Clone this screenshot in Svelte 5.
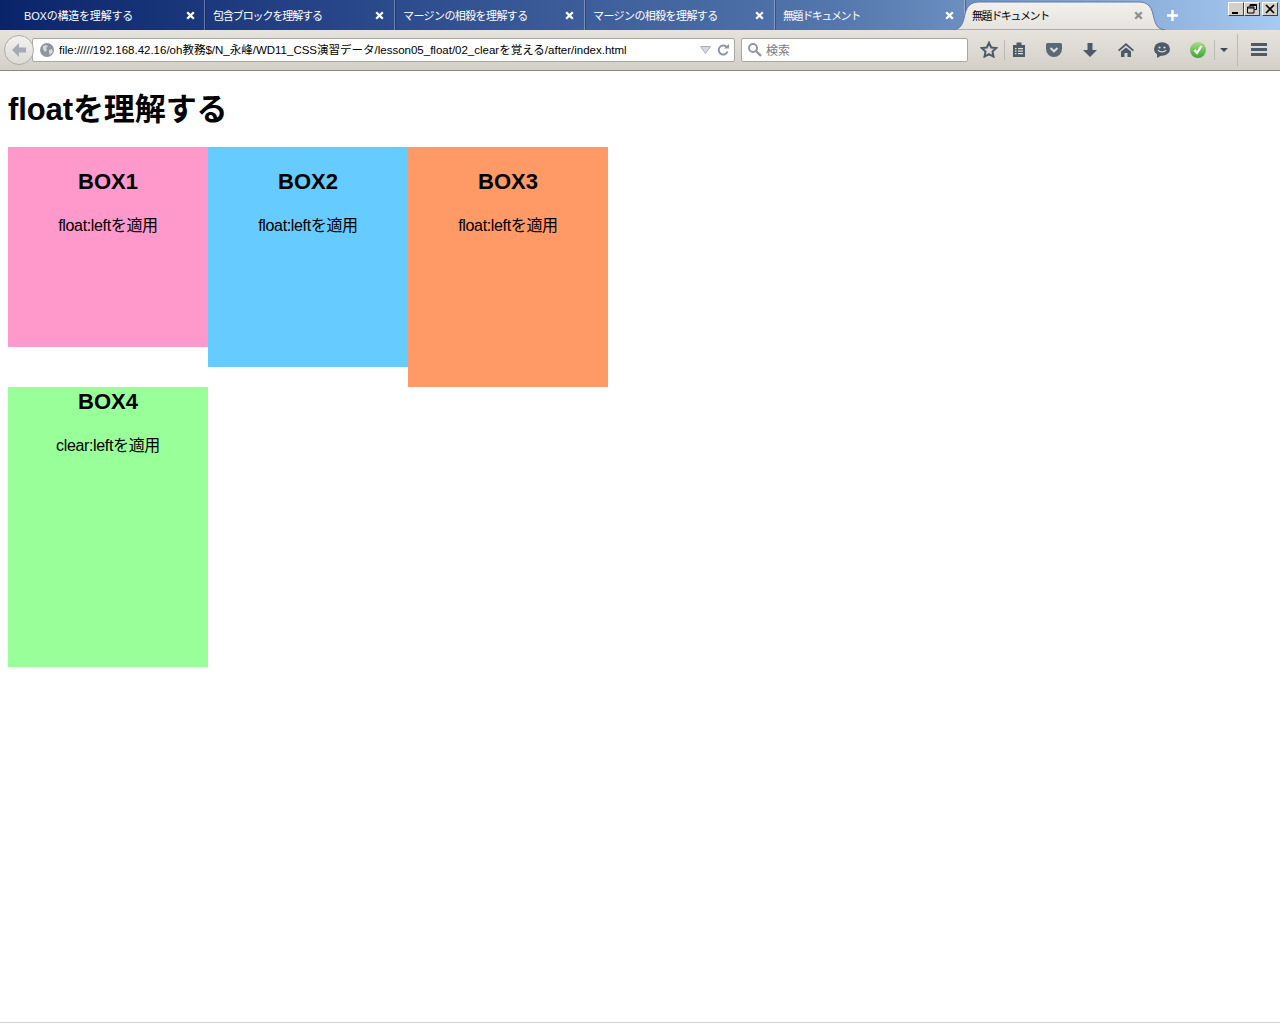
<script lang="ts">
  // spacing per tab: the reference's katakana run narrower than the fallback font
  const tabs = [
    { title: 'BOXの構造を理解する', ls: -0.2 },
    { title: '包含ブロックを理解する', ls: -1.1 },
    { title: 'マージンの相殺を理解する', ls: -0.6 },
    { title: 'マージンの相殺を理解する', ls: -0.6 },
    { title: '無題ドキュメント', ls: -1.4 }
  ];
  const boxes = [
    { name: 'BOX1', note: 'float:leftを適用', cls: 'b1' },
    { name: 'BOX2', note: 'float:leftを適用', cls: 'b2' },
    { name: 'BOX3', note: 'float:leftを適用', cls: 'b3' },
    { name: 'BOX4', note: 'clear:leftを適用', cls: 'b4' }
  ];
</script>

{#snippet closeIcon(color: string)}
  <svg class="close" width="9" height="9" viewBox="0 0 9 9">
    <path d="M1.2 1.2 7.8 7.8M7.8 1.2 1.2 7.8" stroke={color} stroke-width="2.3" />
  </svg>
{/snippet}

<div class="window">
  <header class="tabstrip">
    {#each tabs as t}
      <div class="tab">
        <span class="title" style={`letter-spacing:${t.ls}px`}>{t.title}</span>
        {@render closeIcon('#fff')}
      </div>
    {/each}
    <div class="tab active">
      <svg class="tabshape" width="212" height="30" viewBox="0 0 212 30">
        <defs>
          <linearGradient id="act" x1="0" y1="0" x2="0" y2="1">
            <stop offset="0" stop-color="#f2f1ee" />
            <stop offset="1" stop-color="#e5e3de" />
          </linearGradient>
        </defs>
        <path d="M0 30C8 29 10 24 12 14 14 6 18 2 26 2H186C194 2 198 6 200 14 202 24 204 29 212 30Z" fill="url(#act)" stroke="#5f7ba6" stroke-width="1" />
      </svg>
      <span class="title" style="letter-spacing:-1.4px">無題ドキュメント</span>
      {@render closeIcon('#8f8f8f')}
    </div>
    <svg class="newtab" width="13" height="13" viewBox="0 0 13 13">
      <path d="M6.500 1v11M1 6.500h11" stroke="#fff" stroke-width="2.4" />
    </svg>
    <div class="winbtns">
      <button aria-label="minimize"><svg width="10" height="10" viewBox="0 0 10 10"><path d="M1 8h6v2H1z" fill="#000" /></svg></button>
      <button aria-label="restore"><svg width="10" height="10" viewBox="0 0 10 10"><path d="M3 .5h6.500v5H7.500M3 .5v2M3 1.500h6.500M.5 3h6.500v6H.5zM.5 4h6.500" fill="none" stroke="#000" /></svg></button>
      <button class="x" aria-label="close"><svg width="10" height="10" viewBox="0 0 10 10"><path d="M1 1 9 9M9 1 1 9" stroke="#000" stroke-width="1.700" /></svg></button>
    </div>
  </header>

  <nav class="toolbar">
    <div class="back">
      <svg width="18" height="16" viewBox="0 0 18 16"><path d="M9 1 2 8l7 7V10.500h7v-5H9z" fill="#a3acb6" /></svg>
    </div>
    <div class="urlbar">
      <svg class="globe" width="14" height="14" viewBox="0 0 14 14">
        <circle cx="7" cy="7" r="7" fill="#8f969c" />
        <path d="M3 3c2-1 4-1 5 0L6 5 7 7 5 9 3 6zM9 7l3-1 1 3-3 3-1-2z" fill="#d5d8da" />
      </svg>
      <span class="url">file://///192.168.42.16/oh教務$/N_永峰/WD11_CSS演習データ/lesson05_float/02_clearを覚える/after/index.html</span>
      <svg class="drop" width="11" height="8" viewBox="0 0 11 8"><path d="M.5.500h10L5.500 7.500z" fill="#d5dae2" stroke="#aab2bf" /></svg>
      <svg class="reload" width="12" height="12" viewBox="0 0 12 12">
        <path d="M10 3.500A4.500 4.500 0 1 0 10.500 7.500" fill="none" stroke="#8d97a3" stroke-width="2" />
        <path d="M7 4.500h5V0z" fill="#8d97a3" />
      </svg>
    </div>
    <div class="search">
      <svg width="15" height="15" viewBox="0 0 15 15">
        <circle cx="6" cy="6" r="4" fill="none" stroke="#8f979f" stroke-width="2" />
        <path d="m9 9 5 5" stroke="#8f979f" stroke-width="2.400" />
      </svg>
      <span>検索</span>
    </div>
    <div class="icons">
      <svg class="star" width="18" height="17" viewBox="0 0 18 17">
        <path d="m9 1.800 2.200 4.700 5 .6-3.700 3.500 1 5L9 13.100l-4.500 2.500 1-5L1.800 7.100l5-.6z" fill="none" stroke="#4c5a69" stroke-width="2" />
      </svg>
      <i class="sep s1"></i>
      <svg class="clip" width="14" height="15" viewBox="0 0 14 15">
        <path d="M1 3h3.500V.500h5V3H13v12H1z" fill="#4c5a69" />
        <path d="M3 6h1.500v1.300H3zM6 6h5v1.300H6zM3 8.500h1.500v1.300H3zM6 8.500h5v1.300H6zM3 11h1.500v1.300H3zM6 11h5v1.300H6z" fill="#dedcd6" />
      </svg>
      <svg class="pocket" width="16" height="14" viewBox="0 0 16 14">
        <path d="M1.500 0h13A1.500 1.500 0 0 1 16 1.500V6A8 8 0 0 1 0 6V1.500A1.500 1.500 0 0 1 1.500 0z" fill="#5b6875" />
        <path d="m4.500 5 3.500 3.300L11.500 5" fill="none" stroke="#dedcd6" stroke-width="2" />
      </svg>
      <svg class="down" width="14" height="14" viewBox="0 0 14 14"><path d="M4.500 0h5v7H14l-7 7-7-7h4.500z" fill="#4c5a69" /></svg>
      <svg class="home" width="16" height="14" viewBox="0 0 16 14">
        <path d="M8 0 0 7l1.200 1.300L8 2.500l6.800 5.800L16 7z" fill="#4c5a69" />
        <path d="M3 8.500 8 4.500l5 4V14H9.500V10h-3v4H3z" fill="#4c5a69" />
      </svg>
      <svg class="chat" width="16" height="16" viewBox="0 0 16 16">
        <ellipse cx="8" cy="7" rx="8" ry="6.800" fill="#4c5a69" />
        <path d="M3 11v5l5-3z" fill="#4c5a69" />
        <circle cx="5.500" cy="5.500" r="1.100" fill="#dedcd6" />
        <circle cx="10.500" cy="5.500" r="1.100" fill="#dedcd6" />
        <path d="M4 8c1.500 2.500 6.500 2.500 8 0" fill="none" stroke="#dedcd6" stroke-width="1.300" />
      </svg>
      <svg class="ok" width="16" height="16" viewBox="0 0 16 16">
        <defs>
          <linearGradient id="okg" x1="0" y1="0" x2="0" y2="1">
            <stop offset="0" stop-color="#a8dd80" />
            <stop offset="1" stop-color="#3da53a" />
          </linearGradient>
        </defs>
        <circle cx="8" cy="8" r="8" fill="url(#okg)" />
        <path d="m4.500 8 2.500 3L11.500 4" fill="none" stroke="#fff" stroke-width="2.200" />
      </svg>
      <i class="sep s2"></i>
      <svg class="caret" width="8" height="4" viewBox="0 0 8 4"><path d="M0 0h8L4 4z" fill="#3f4a55" /></svg>
      <i class="sep s3"></i>
      <div class="menu"><i></i><i></i><i></i></div>
    </div>
  </nav>

  <main class="page">
    <h1>floatを理解する</h1>
    {#each boxes as b}
      <div class="box {b.cls}">
        <h2>{b.name}</h2>
        <p>{b.note}</p>
      </div>
    {/each}
  </main>
</div>

<style>
  :global(body) {
    background: #fff;
  }
  .window {
    height: 1024px;
    display: flex;
    flex-direction: column;
    overflow: hidden;
    font-family: "Liberation Sans", "Noto Sans CJK JP", sans-serif;
    color: #000;
  }

  .tabstrip {
    position: relative;
    flex: none;
    height: 30px;
    display: flex;
    padding-left: 15px;
    background: linear-gradient(90deg, #0a246a 0%, #2b4a8c 30%, #5376ac 65%, #a6caf0 100%);
  }
  .tab {
    position: relative;
    flex: none;
    width: 190px;
    box-sizing: border-box;
    display: flex;
    align-items: center;
    padding: 0 10px 0 8px;
    border-right: 1px solid rgba(210, 220, 235, 0.4);
    box-shadow: 1px 0 0 rgba(10, 30, 80, 0.35);
    font-size: 11px;
    color: #fff;
  }
  .tab:first-child {
    padding-left: 9px;
    padding-right: 9px;
  }
  .title {
    position: relative;
    flex: 1;
    white-space: nowrap;
  }
  .close {
    position: relative;
    flex: none;
  }
  .tab.active {
    width: 192px;
    margin-left: -2px;
    padding: 0 12px 0 9px;
    border: 0;
    box-shadow: none;
    color: #000;
  }
  .tabshape {
    position: absolute;
    left: -10px;
    top: 0;
  }
  .newtab {
    align-self: center;
    margin: 0 0 0 11px;
  }
  .winbtns {
    position: absolute;
    right: 2px;
    top: 2px;
    display: flex;
  }
  .winbtns button {
    width: 16px;
    height: 14px;
    padding: 0;
    margin: 0;
    display: flex;
    align-items: center;
    justify-content: center;
    background: #d4d0c8;
    border: 1px solid;
    border-color: #fff #404040 #404040 #fff;
  }
  .winbtns .x {
    margin-left: 2px;
  }

  .toolbar {
    flex: none;
    height: 41px;
    box-sizing: border-box;
    display: flex;
    align-items: center;
    padding: 0 0 1px 4px;
    border-bottom: 1px solid #8b8985;
    background: linear-gradient(#e5e3dd, #d4d0c8);
  }
  .back {
    position: relative;
    z-index: 1;
    flex: none;
    width: 30px;
    height: 30px;
    box-sizing: border-box;
    margin-right: -2px;
    display: flex;
    align-items: center;
    justify-content: center;
    border: 1px solid #aeaba5;
    border-radius: 50%;
    background: linear-gradient(#f3f2ef, #dcdad4);
  }
  .urlbar {
    flex: none;
    width: 703px;
    height: 24px;
    box-sizing: border-box;
    display: flex;
    align-items: center;
    padding: 0 5px 0 7px;
    background: #fff;
    border: 1px solid #a9a7a2;
    border-radius: 2px;
    font-size: 11.5px;
  }
  .globe {
    flex: none;
    margin-right: 5px;
  }
  .url {
    flex: 1;
    padding-bottom: 2px;
    white-space: nowrap;
  }
  .drop {
    margin-right: 6px;
  }
  .search {
    flex: none;
    width: 227px;
    height: 24px;
    box-sizing: border-box;
    margin-left: 6px;
    display: flex;
    align-items: center;
    gap: 4px;
    padding-left: 5px;
    background: #fff;
    border: 1px solid #a9a7a2;
    border-radius: 2px;
    font-size: 12px;
    color: #7b7b7b;
  }
  .icons {
    flex: 1;
    height: 100%;
    display: flex;
    align-items: center;
  }
  .star {
    margin-left: 12px;
  }
  .sep {
    flex: none;
    width: 1px;
    height: 20px;
    background: #bdbab3;
  }
  .s1 {
    margin-left: 6px;
  }
  .clip {
    margin-left: 7px;
  }
  .pocket {
    margin-left: 20px;
  }
  .down {
    margin-left: 21px;
  }
  .home {
    margin-left: 21px;
  }
  .chat {
    margin-left: 20px;
  }
  .ok {
    margin-left: 20px;
  }
  .s2 {
    margin-left: 8px;
  }
  .caret {
    margin-left: 5px;
  }
  .s3 {
    margin-left: 9px;
    height: 32px;
  }
  .menu {
    margin-left: 13px;
    display: grid;
    gap: 2px;
  }
  .menu i {
    display: block;
    width: 16px;
    height: 3px;
    background: #4c5a69;
  }

  .page {
    flex: 1;
    box-sizing: border-box;
    margin-bottom: 1px;
    padding: 0 8px;
    border-bottom: 1px solid #d4d0c8;
  }
  h1 {
    margin: 20px 0 19px;
    font-size: 31px;
    line-height: 37px;
    letter-spacing: -0.1px;
    font-weight: 700;
  }
  .box {
    float: left;
    width: 200px;
    text-align: center;
  }
  .box h2 {
    margin: 0 0 17px;
    font-size: 22px;
    line-height: 30px;
    font-weight: 700;
  }
  .box p {
    margin: 0;
    font-size: 16px;
    line-height: 24px;
    letter-spacing: -0.35px;
  }
  .b1 {
    height: 180px;
    padding-top: 20px;
    background: #f9c;
  }
  .b2 {
    height: 200px;
    padding-top: 20px;
    background: #6cf;
  }
  .b3 {
    height: 220px;
    padding-top: 20px;
    background: #f96;
  }
  .b4 {
    clear: left;
    height: 280px;
    background: #9f9;
  }
</style>
